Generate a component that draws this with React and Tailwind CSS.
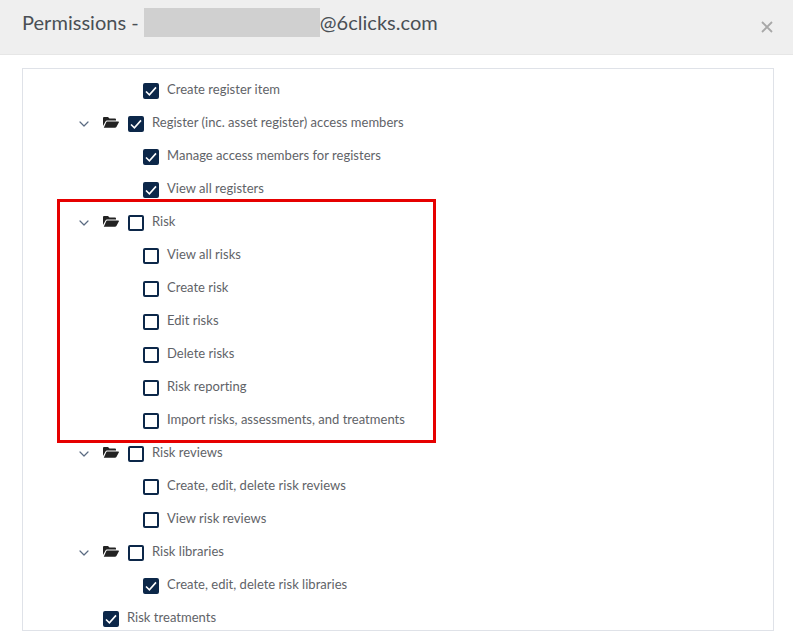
import React from "react";
import { ChevronDown } from "lucide-react";

function Box({ on }) {
  return (
    <span className={"flex h-4 w-4 shrink-0 items-center justify-center rounded-[2px] border-2 border-[#0c2749] " + (on ? "bg-[#0c2749]" : "bg-white")}>
      {on && (
        <svg width="12" height="12" viewBox="0 0 12 12" className="block shrink-0">
          <path d="M1 6.5 L4.4 9.8 L11 2.4" fill="none" stroke="#fff" strokeWidth="1.6" />
        </svg>
      )}
    </span>
  );
}

function Folder() {
  return (
    <svg width="16" height="13" viewBox="0 0 16 13" className="block">
      <path d="M0 2 Q0 1 1 1 H5 L6.5 2.5 H12 Q13 2.5 13 3.5 V4.5 H4 Q3 4.5 2.5 5.5 L0 10 Z" fill="#222" />
      <path d="M4 5.5 H15.4 Q16.3 5.5 15.8 6.5 L13.4 11 Q13 11.7 12 11.7 H0.8 L3.2 6.3 Q3.5 5.5 4 5.5 Z" fill="#222" />
    </svg>
  );
}

function Leaf({ label, on }) {
  return (
    <div className="flex h-[33px] items-center pl-[120px]">
      <Box on={on} />
      <span className="ml-2 -translate-y-px tracking-[0.02px]">{label}</span>
    </div>
  );
}

function Parent({ label, on }) {
  return (
    <div className="flex h-[33px] items-center pl-[53px]">
      <ChevronDown size={16} strokeWidth={1.8} className="text-[#5b6b82]" />
      <span className="ml-[11px] -translate-y-px"><Folder /></span>
      <span className="ml-[9px]"><Box on={on} /></span>
      <span className="ml-2 -translate-y-px tracking-[0.02px]">{label}</span>
    </div>
  );
}

export default function App() {
  return (
    <div className="relative h-[638px] w-[793px] overflow-hidden bg-white font-['Lato','Liberation_Sans',sans-serif] text-[13px] text-[#5f6368]">
      <header className="flex h-[55px] items-center justify-between border-b border-[#e6e6e6] bg-[#efefef] pb-[10px] pl-[22px] pr-[20px]">
        <div className="flex items-center text-[20px] tracking-[0.03px] text-[#4a4f55]">
          <span>Permissions -</span>
          <span className="ml-[5px] h-[29px] w-[176px] bg-[#d0d0d0]" />
          <span>@6clicks.com</span>
        </div>
        <span className="mt-[10px] flex h-3 w-3 items-center justify-center">
          <svg width="12" height="12" viewBox="0 0 12 12">
            <path d="M1 1 L11 11 M11 1 L1 11" stroke="#a8a8a8" strokeWidth="1.8" />
          </svg>
        </span>
      </header>

      <div className="mx-[22px] mt-[13px] h-[563px] w-[752px] overflow-hidden border border-[#dfe2e8] pt-[5px]">
        <Leaf label="Create register item" on />
        <Parent label="Register (inc. asset register) access members" on />
        <Leaf label="Manage access members for registers" on />
        <Leaf label="View all registers" on />
        <Parent label="Risk" />
        <Leaf label="View all risks" />
        <Leaf label="Create risk" />
        <Leaf label="Edit risks" />
        <Leaf label="Delete risks" />
        <Leaf label="Risk reporting" />
        <Leaf label="Import risks, assessments, and treatments" />
        <Parent label="Risk reviews" />
        <Leaf label="Create, edit, delete risk reviews" />
        <Leaf label="View risk reviews" />
        <Parent label="Risk libraries" />
        <Leaf label="Create, edit, delete risk libraries" on />
        <div className="flex h-[33px] items-center pl-[80px]">
          <Box on />
          <span className="ml-2 -translate-y-px tracking-[0.02px]">Risk treatments</span>
        </div>
      </div>

      <div className="absolute left-[57px] top-[199px] h-[244px] w-[379px] border-[3px] border-[#e60000]" />
    </div>
  );
}
